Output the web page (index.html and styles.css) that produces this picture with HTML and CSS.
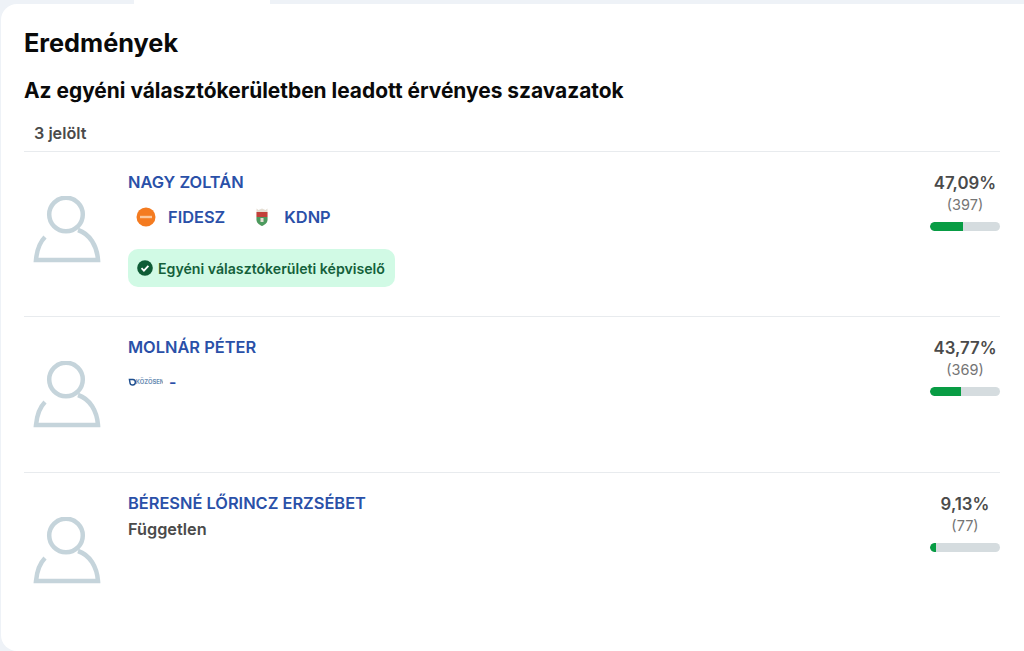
FILE: index.html
```html
<!DOCTYPE html>
<html lang="hu">
<head>
<meta charset="utf-8">
<title>Eredmények</title>
<link rel="stylesheet" href="styles.css">
</head>
<body>
<div class="tab"></div>
<main class="card">
  <h1 class="title">Eredmények</h1>
  <h2 class="subtitle">Az egyéni választókerületben leadott érvényes szavazatok</h2>
  <div class="count">3 jelölt</div>

  <section class="row row-first">
    <svg class="avatar" viewBox="0 0 68 68"><use href="#person"/></svg>
    <div class="info">
      <a class="name">NAGY ZOLTÁN</a>
      <div class="parties">
        <span class="party">
          <svg class="logo" viewBox="0 0 20 20"><circle cx="10" cy="10" r="9.500" fill="#f47b20"/><rect x="4" y="8.800" width="12" height="2.400" fill="#fbc79a"/></svg>
          <span class="party-name">FIDESZ</span>
        </span>
        <span class="party">
          <svg class="logo" viewBox="0 0 20 20"><path d="M4.500 1.500l2 1.500 3.500-1.500 3.500 1.500 2-1.500v11c0 3.500-2.500 5-5.500 6.500C7 17.500 4.500 16 4.500 12.500z" fill="#e4ddd2"/><path d="M4.500 5h11v5h-11z" fill="#c2413a"/><path d="M4.500 10h11v2.500c0 3.500-2.500 5-5.500 6.500C7 17.500 4.500 16 4.500 12.500z" fill="#4c9a5e"/><path d="M8.500 11h3v4h-3z" fill="#e4ddd2"/></svg>
          <span class="party-name">KDNP</span>
        </span>
      </div>
      <div class="badge">
        <svg class="check" viewBox="0 0 16 16"><circle cx="8" cy="8" r="7.800" fill="#0f5c36"/><path d="M4.500 8.200l2.400 2.400 4.500-4.800" fill="none" stroke="#fff" stroke-width="1.800"/></svg>
        Egyéni választókerületi képviselő
      </div>
    </div>
    <div class="result">
      <div class="percent">47,09%</div>
      <div class="votes">(397)</div>
      <div class="bar"><div class="fill" style="width:47.09%"></div></div>
    </div>
  </section>

  <section class="row row-second">
    <svg class="avatar" viewBox="0 0 68 68"><use href="#person"/></svg>
    <div class="info">
      <a class="name">MOLNÁR PÉTER</a>
      <div class="parties-small">
        <svg class="kozosen" viewBox="0 0 36 10"><path d="M1.500 2.500h3.500a2.800 2.800 0 1 1-3 3z" fill="none" stroke="#1f4f8f" stroke-width="1.500"/><text x="8" y="6.800" class="kozosen-text">KÖZÖSEN</text></svg>
        <span class="dash">-</span>
      </div>
    </div>
    <div class="result">
      <div class="percent">43,77%</div>
      <div class="votes">(369)</div>
      <div class="bar"><div class="fill" style="width:43.77%"></div></div>
    </div>
  </section>

  <section class="row row-third">
    <svg class="avatar" viewBox="0 0 68 68"><use href="#person"/></svg>
    <div class="info">
      <a class="name">BÉRESNÉ LŐRINCZ ERZSÉBET</a>
      <div class="independent">Független</div>
    </div>
    <div class="result">
      <div class="percent">9,13%</div>
      <div class="votes">(77)</div>
      <div class="bar"><div class="fill" style="width:9.13%"></div></div>
    </div>
  </section>
</main>
<svg class="defs" width="0" height="0">
  <defs>
    <g id="person" fill="none" stroke="#c5d4db" stroke-width="4.500">
      <circle cx="33" cy="18.500" r="16.800"/>
      <path d="M45 34C57 38 64 50 65 64H3C4 53 7 46 12 41"/>
    </g>
  </defs>
</svg>
</body>
</html>
```
FILE: styles.css
```css
* { box-sizing: border-box; }
html, body { margin: 0; height: 100%; }
body {
  background: #eef2f7;
  font-family: Inter, "Liberation Sans", sans-serif;
  padding: 4px 0 0 1px;
  overflow: hidden;
}
.tab {
  position: absolute;
  top: 0;
  left: 134px;
  width: 136px;
  height: 5px;
  background: #fff;
}
.card {
  background: #fff;
  border-radius: 16px 0 0 16px;
  height: 647px;
  padding: 0 24px 0 23px;
}
.title {
  margin: 0;
  padding-top: 23px;
  font-size: 25.300px;
  line-height: 32px;
  font-weight: 700;
  color: #0a0a0a;
}
.subtitle {
  margin: 18px 0 0;
  font-size: 20.900px;
  line-height: 28px;
  font-weight: 700;
  color: #0a0a0a;
}
.count {
  margin-top: 16px;
  padding: 0 10px 6px;
  font-size: 16.200px;
  line-height: 24px;
  font-weight: 600;
  color: #4a4a4a;
  border-bottom: 1px solid #e8ebee;
}
.row {
  display: flex;
  align-items: flex-start;
  border-bottom: 1px solid #e8ebee;
  padding-top: 20px;
}
.row-first { height: 165px; }
.row-second { height: 156px; }
.row-third { border-bottom: 0; }
.avatar {
  width: 68px;
  height: 68px;
  margin: 24px 0 0 9px;
  flex: none;
}
.info {
  margin-left: 27px;
  flex: 1;
  min-width: 0;
}
.name {
  display: block;
  font-size: 16.400px;
  line-height: 20px;
  font-weight: 600;
  color: #2a50a8;
}
.parties {
  display: flex;
  gap: 27px;
  margin-top: 15px;
  padding-left: 8px;
}
.party {
  display: flex;
  align-items: center;
  gap: 12px;
}
.logo { width: 20px; height: 20px; flex: none; }
.party-name {
  font-size: 16.400px;
  line-height: 20px;
  font-weight: 600;
  color: #2a50a8;
}
.badge {
  display: inline-flex;
  align-items: center;
  gap: 5px;
  margin-top: 22px;
  height: 38px;
  width: 267px;
  padding: 0 9px;
  background: #d1fae5;
  border-radius: 10px;
  font-size: 14.150px;
  font-weight: 600;
  color: #14603a;
  white-space: nowrap;
}
.check { width: 16px; height: 16px; flex: none; }
.parties-small {
  display: flex;
  align-items: center;
  gap: 6px;
  margin-top: 15px;
  height: 20px;
}
.kozosen { width: 35px; height: 10px; }
.kozosen-text {
  font-family: Inter, sans-serif;
  font-size: 6px;
  font-weight: 700;
  fill: #6d8fb5;
}
.dash {
  font-size: 16px;
  line-height: 20px;
  font-weight: 600;
  color: #2a50a8;
}
.independent {
  margin-top: 6px;
  font-size: 16.300px;
  line-height: 20px;
  font-weight: 600;
  color: #4a4a4a;
}
.result {
  width: 70px;
  flex: none;
  text-align: center;
  padding-top: 1px;
}
.percent {
  font-size: 16.800px;
  line-height: 20px;
  font-weight: 600;
  color: #4a4a4a;
}
.votes {
  margin-top: 2px;
  font-size: 14.500px;
  line-height: 20px;
  color: #757575;
}
.bar {
  margin-top: 7px;
  height: 9px;
  background: #d5dcdf;
  border-radius: 5px;
  overflow: hidden;
}
.fill {
  height: 100%;
  background: #089c44;
  border-radius: 5px 0 0 5px;
}
.defs { position: absolute; }
```
